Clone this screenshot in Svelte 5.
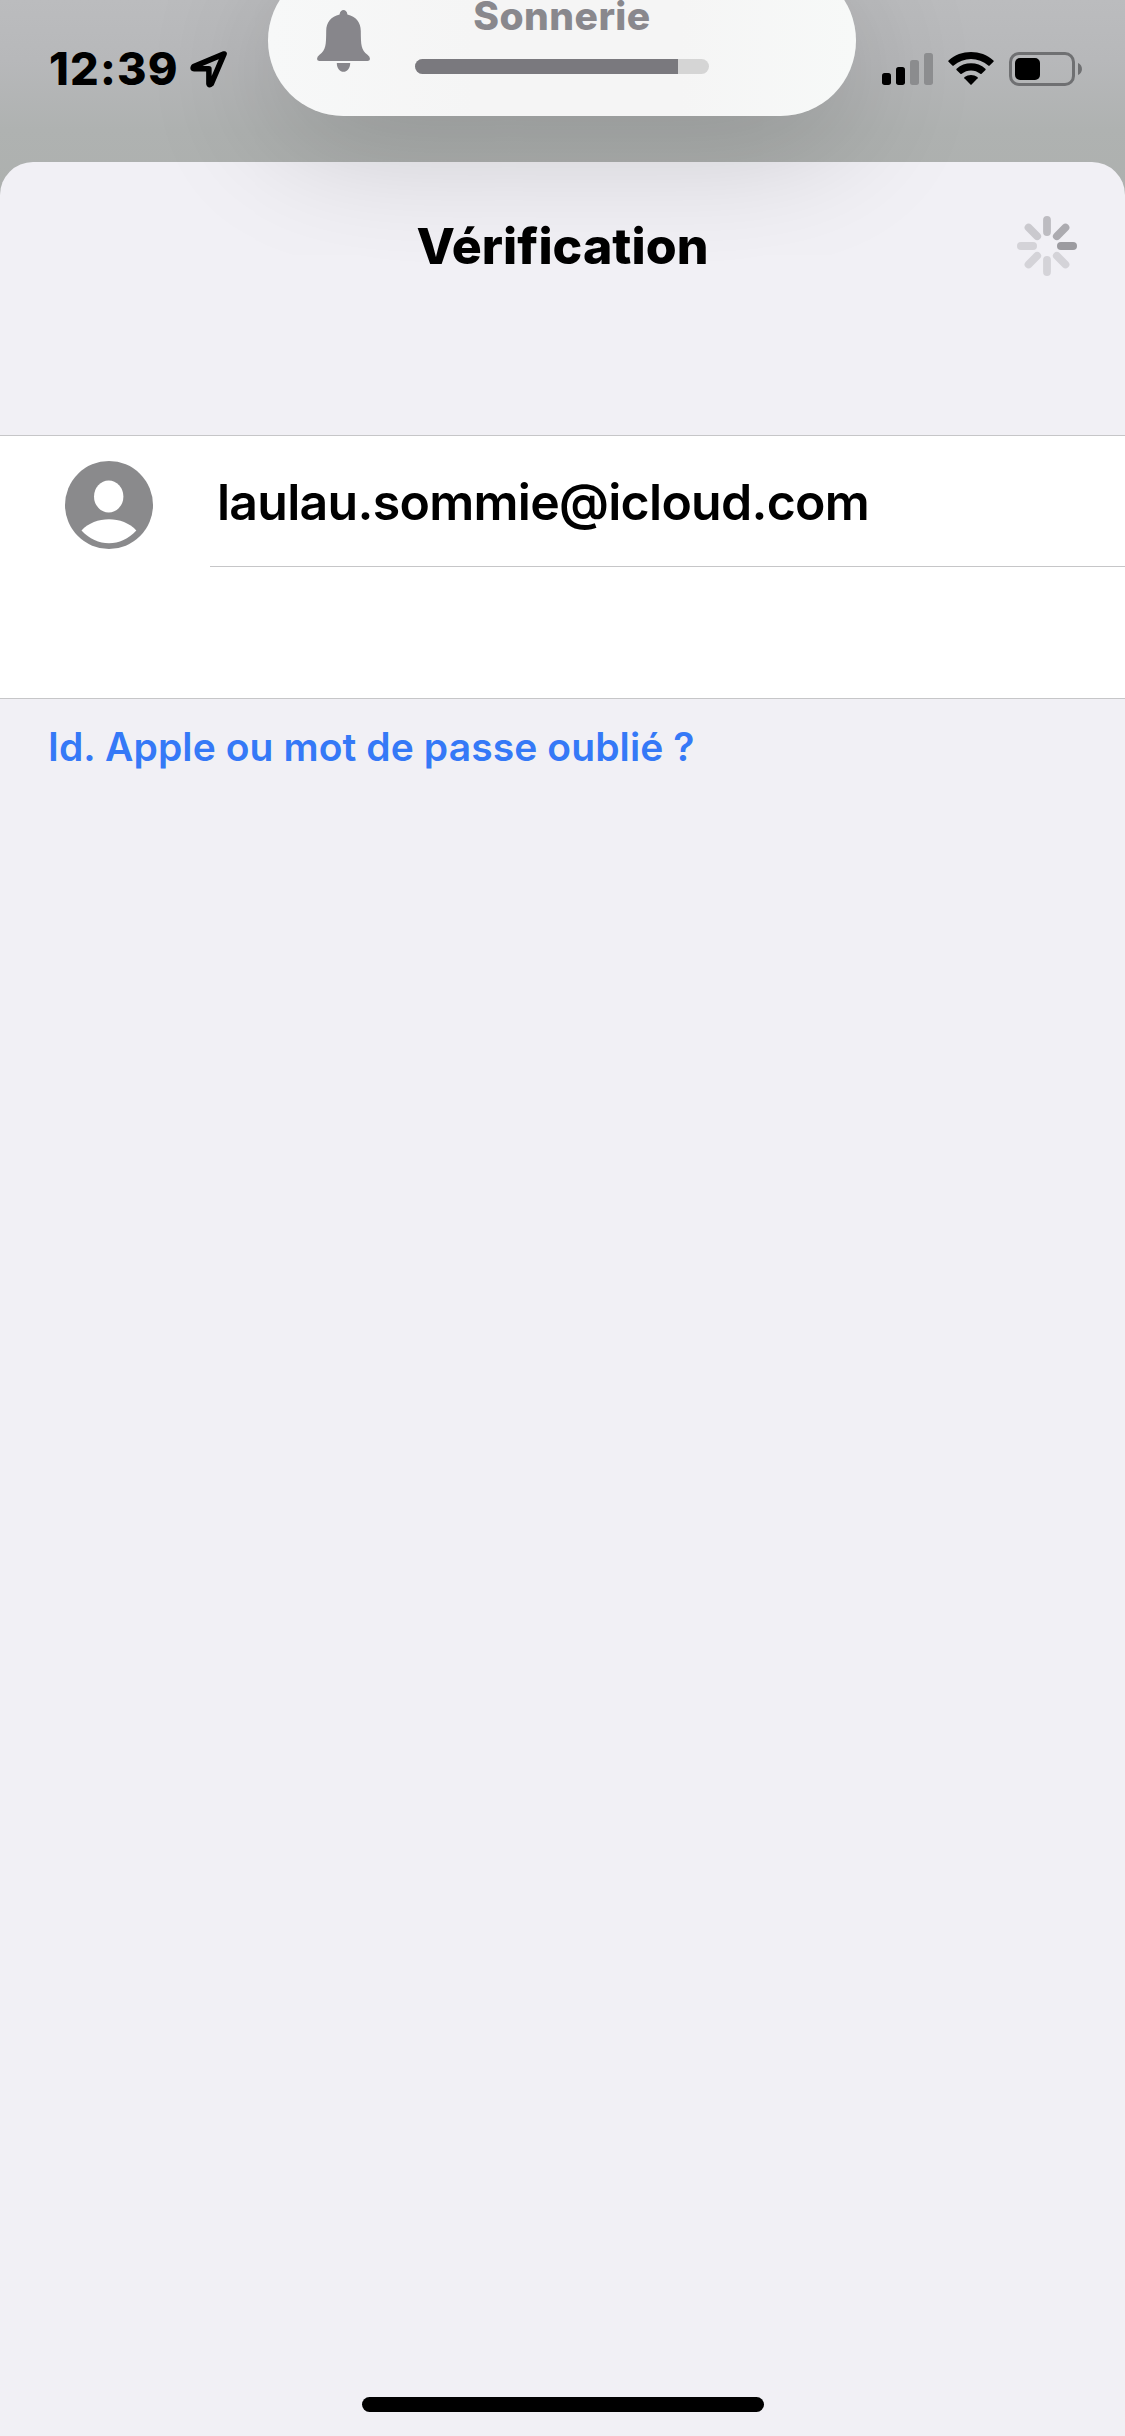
<script>
  const spokes = [
    { angle: 0, color: '#bdbcc1' },
    { angle: 45, color: '#acabb0' },
    { angle: 90, color: '#9c9ba0' },
    { angle: 135, color: '#d4d3d8' },
    { angle: 180, color: '#d4d3d8' },
    { angle: 225, color: '#d4d3d8' },
    { angle: 270, color: '#d4d3d8' },
    { angle: 315, color: '#cac9ce' },
  ];
  const email = 'laulau.sommie@icloud.com';
  const volume = 89.5;
</script>

<div class="screen">
  <header class="status">
    <div class="left">
      <span class="time">12:39</span>
      <svg class="location" width="38" height="38" viewBox="0 0 38 38">
        <path d="M34.100 3.900 L3.700 16.600 Q2.200 18.800 4.200 18.800 H18.900 V33.600 Q19.300 35.600 21.300 33.800 Z" fill="none" stroke="#000" stroke-width="5.500" stroke-linejoin="round" />
      </svg>
    </div>
    <div class="right">
      <svg width="51" height="34" viewBox="0 0 51 34">
        <rect x="0" y="21" width="9" height="12" rx="2.700" />
        <rect x="14" y="15" width="9" height="18" rx="2.700" />
        <rect x="28" y="8" width="9" height="25" rx="2.700" fill="#8e8f91" />
        <rect x="42" y="1" width="9" height="32" rx="2.700" fill="#8e8f91" />
      </svg>
      <svg class="wifi" width="46" height="34" viewBox="0 0 46 34">
        <path d="M.5 9.700 Q0 9.100 .6 8.500 C12.800 -2.800 33.200 -2.800 45.400 8.500 Q46 9.100 45.500 9.700 L41.600 13.600 Q41 14.200 40.300 13.600 C30.600 4.900 15.400 4.900 5.700 13.600 Q5 14.200 4.400 13.600 Z" />
        <path d="M8.500 17.900 Q8 17.300 8.600 16.700 C16.500 9.600 29.500 9.600 37.400 16.700 Q38 17.300 37.500 17.900 L33.600 21.800 Q33 22.400 32.300 21.800 C27 17.300 19 17.300 13.700 21.800 Q13 22.400 12.400 21.800 Z" />
        <path d="M16.400 26.300 Q15.900 25.700 16.600 25.100 C20.200 22.200 25.800 22.200 29.400 25.100 Q30.100 25.700 29.600 26.300 L23.600 32.500 Q23 33.100 22.400 32.500 Z" />
      </svg>
      <svg width="73" height="34" viewBox="0 0 73 34">
        <rect x="1.500" y="1.500" width="63" height="31" rx="8.500" fill="none" stroke="#6f7072" stroke-width="3" />
        <rect x="6" y="6" width="25" height="22" rx="5" />
        <path d="M69 11 C74.300 13 74.300 21 69 23 Z" fill="#6f7072" />
      </svg>
    </div>
  </header>

  <main class="sheet">
    <div class="nav">
      <h1>Vérification</h1>
      <svg class="spinner" width="60" height="60" viewBox="-30 -30 60 60">
        {#each spokes as s}
          <rect x="-3.900" y="-30" width="7.800" height="20" rx="3.900" fill={s.color} transform="rotate({s.angle})" />
        {/each}
      </svg>
    </div>
    <section class="list">
      <div class="row">
        <svg class="avatar" width="88" height="88" viewBox="0 0 88 88">
          <circle cx="44" cy="44" r="44" fill="#8a8a8c" />
          <ellipse cx="43.700" cy="35.500" rx="14.700" ry="16" fill="#fff" />
          <path d="M16.500 69.500 C30 54.500 58 54.500 71.300 69.500 C56 86.500 32 86.500 16.500 69.500 Z" fill="#fff" />
        </svg>
        <div class="field"><span class="email">{email}</span></div>
      </div>
      <div class="row empty"></div>
    </section>
    <a class="forgot" href="#forgot">Id. Apple ou mot de passe oublié ?</a>
    <div class="home"></div>
  </main>

  <aside class="hud">
    <svg class="bell" width="53" height="62" viewBox="0 0 53 62">
      <path d="M22.600 4.600 C23 -1.500 30 -1.500 30.400 4.600 C39 6.500 43.700 12.500 43.800 21 C43.900 35 44 40 50.500 44.700 Q53 46.500 53 49 Q52.800 51 50.500 51 H2.500 Q.2 51 0 49 Q0 46.500 2.500 44.700 C9 40 9.100 35 9.200 21 C9.300 12.500 14 6.500 22.600 4.600 Z M19.800 53 H33.200 C33.200 64.700 19.800 64.700 19.800 53 Z" fill="#87868b" />
    </svg>
    <div class="level">
      <span class="label">Sonnerie</span>
      <div class="track"><div class="fill" style="width: {volume}%"></div></div>
    </div>
  </aside>
</div>

<style>
  :global(body) {
    margin: 0;
  }
  .screen {
    position: relative;
    display: flex;
    flex-direction: column;
    width: 1125px;
    height: 2436px;
    overflow: hidden;
    font-family: Inter, 'Liberation Sans', sans-serif;
    color: #000;
    background: linear-gradient(#bbbcbe 0, #b7b8ba 60px, #afb2b1 130px, #adb0ae 200px);
  }
  .status {
    display: flex;
    justify-content: space-between;
    height: 162px;
    padding: 0 43px 0 49px;
    box-sizing: border-box;
  }
  .left,
  .right {
    display: flex;
    align-items: flex-start;
  }
  .time {
    margin-top: 42px;
    font-size: 45px;
    line-height: 54px;
    font-weight: 800;
    letter-spacing: 1.2px;
    width: 141px;
    white-space: nowrap;
  }
  .location {
    margin-top: 50px;
  }
  .right {
    padding-top: 52px;
  }
  .wifi {
    margin: 0 15px;
  }
  .sheet {
    flex: 1;
    display: flex;
    flex-direction: column;
    background: #f1f0f5;
    border-radius: 33px 33px 0 0;
  }
  .nav {
    display: grid;
    grid-template-columns: 1fr auto 1fr;
    align-items: center;
    height: 168px;
    padding: 0 48px;
    margin-bottom: 105px;
  }
  h1 {
    grid-column: 2;
    margin: 0;
    font-size: 50px;
    line-height: 60px;
    font-weight: 800;
    letter-spacing: 0.05px;
  }
  .spinner {
    justify-self: end;
  }
  .list {
    background: #fff;
    border-top: 1px solid #c6c6c8;
    border-bottom: 1px solid #c6c6c8;
  }
  .row {
    display: flex;
    height: 131px;
  }
  .avatar {
    flex: none;
    margin: 25px 57px 0 65px;
  }
  .field {
    flex: 1;
    border-bottom: 1px solid #c6c6c8;
    padding: 36px 0 0 7px;
  }
  .email {
    font-size: 50px;
    line-height: 60px;
    font-weight: 600;
    letter-spacing: -0.72px;
  }
  .forgot {
    align-self: flex-start;
    margin: 25px 0 0 48px;
    font-size: 39px;
    line-height: 46px;
    font-weight: 600;
    letter-spacing: 0.1px;
    color: #3579f7;
    text-decoration: none;
    white-space: nowrap;
  }
  .home {
    width: 402px;
    height: 15px;
    margin: auto auto 24px 362px;
    border-radius: 8px;
    background: #000;
  }
  .hud {
    position: absolute;
    left: 268px;
    top: -35px;
    width: 588px;
    height: 151px;
    box-sizing: border-box;
    display: flex;
    padding-left: 49px;
    border-radius: 76px;
    background: linear-gradient(90deg, #f7f8f8, #f5f5f5 35%, #f5f5f5 70%, #f7f9f8);
    box-shadow: 0 30px 130px rgba(0, 0, 0, 0.18);
  }
  .bell {
    margin-top: 45px;
  }
  .level {
    width: 294px;
    margin: 27px 0 0 45px;
    display: flex;
    flex-direction: column;
    align-items: center;
  }
  .label {
    font-size: 39px;
    line-height: 48px;
    font-weight: 800;
    letter-spacing: 0.45px;
    color: #89888d;
  }
  .track {
    width: 294px;
    height: 15px;
    margin-top: 19px;
    border-radius: 8px;
    overflow: hidden;
    background: #d5d5d5;
  }
  .fill {
    height: 100%;
    background: #7a797e;
  }
</style>
